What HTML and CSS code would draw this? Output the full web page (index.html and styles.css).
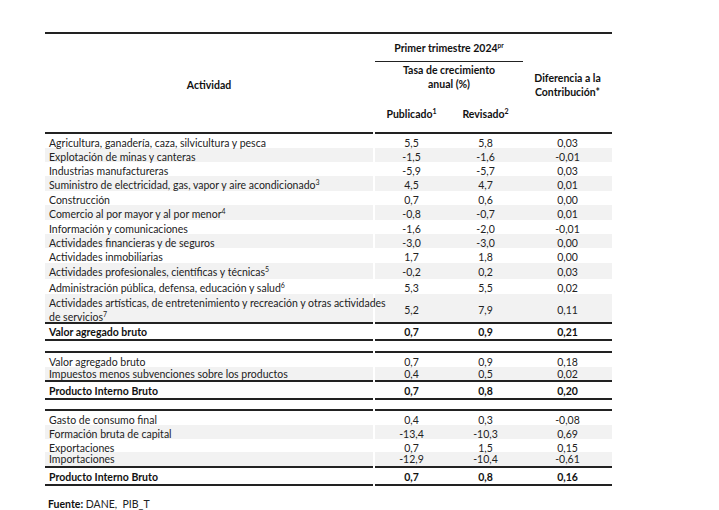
FILE: index.html
```html
<!DOCTYPE html>
<html lang="es">
<head>
<meta charset="utf-8">
<link rel="stylesheet" href="styles.css">
</head>
<body>
<div class="page">
  <div class="tbl">
    <div class="head">
      <div class="h-act"><span>Actividad</span></div>
      <div class="h-trim">Primer trimestre 2024<sup class="sp">pr</sup></div>
      <div class="h-tasa">Tasa de crecimiento<br>anual (%)</div>
      <div class="h-dif"><span>Diferencia a la<br>Contribución*</span></div>
      <div class="h-pub">Publicado<sup class="sn">1</sup></div>
      <div class="h-rev">Revisado<sup class="sn">2</sup></div>
    </div>

    <div class="sec">
      <div class="row r135"><div class="lab"><span>Agricultura, ganadería, caza, silvicultura y pesca</span></div><div class="n">5,5</div><div class="n">5,8</div><div class="n">0,03</div></div>
      <div class="row r14 g"><div class="lab"><span>Explotación de minas y canteras</span></div><div class="n">-1,5</div><div class="n">-1,6</div><div class="n">-0,01</div></div>
      <div class="row r14"><div class="lab"><span>Industrias manufactureras</span></div><div class="n">-5,9</div><div class="n">-5,7</div><div class="n">0,03</div></div>
      <div class="row r155 g"><div class="lab"><span>Suministro de electricidad, gas, vapor y aire acondicionado<sup class="sn">3</sup></span></div><div class="n">4,5</div><div class="n">4,7</div><div class="n">0,01</div></div>
      <div class="row r14"><div class="lab"><span>Construcción</span></div><div class="n">0,7</div><div class="n">0,6</div><div class="n">0,00</div></div>
      <div class="row r15 g"><div class="lab"><span>Comercio al por mayor y al por menor<sup class="sn">4</sup></span></div><div class="n">-0,8</div><div class="n">-0,7</div><div class="n">0,01</div></div>
      <div class="row r14"><div class="lab"><span>Información y comunicaciones</span></div><div class="n">-1,6</div><div class="n">-2,0</div><div class="n">-0,01</div></div>
      <div class="row r14 g"><div class="lab"><span>Actividades financieras y de seguros</span></div><div class="n">-3,0</div><div class="n">-3,0</div><div class="n">0,00</div></div>
      <div class="row r145"><div class="lab"><span>Actividades inmobiliarias</span></div><div class="n">1,7</div><div class="n">1,8</div><div class="n">0,00</div></div>
      <div class="row r16 g"><div class="lab"><span>Actividades profesionales, científicas y técnicas<sup class="sn">5</sup></span></div><div class="n">-0,2</div><div class="n">0,2</div><div class="n">0,03</div></div>
      <div class="row r155"><div class="lab"><span>Administración pública, defensa, educación y salud<sup class="sn">6</sup></span></div><div class="n">5,3</div><div class="n">5,5</div><div class="n">0,02</div></div>
      <div class="row r275 g"><div class="lab"><span>Actividades artísticas, de entretenimiento y recreación y otras actividades<br>de servicios<sup class="sn">7</sup></span></div><div class="n">5,2</div><div class="n">7,9</div><div class="n">0,11</div></div>
      <div class="row tot t125"><div class="lab"><span>Valor agregado bruto</span></div><div class="n">0,7</div><div class="n">0,9</div><div class="n">0,21</div></div>
    </div>

    <div class="sec sec-b">
      <div class="row r14 first"><div class="lab"><span>Valor agregado bruto</span></div><div class="n">0,7</div><div class="n">0,9</div><div class="n">0,18</div></div>
      <div class="row r13 g pre"><div class="lab"><span>Impuestos menos subvenciones sobre los productos</span></div><div class="n">0,4</div><div class="n">0,5</div><div class="n">0,02</div></div>
      <div class="row tot t12"><div class="lab"><span>Producto Interno Bruto</span></div><div class="n">0,7</div><div class="n">0,8</div><div class="n">0,20</div></div>
    </div>

    <div class="sec sec-b">
      <div class="row r1375 first"><div class="lab"><span>Gasto de consumo final</span></div><div class="n">0,4</div><div class="n">0,3</div><div class="n">-0,08</div></div>
      <div class="row r1375 g"><div class="lab"><span>Formación bruta de capital</span></div><div class="n">-13,4</div><div class="n">-10,3</div><div class="n">0,69</div></div>
      <div class="row r1375"><div class="lab"><span>Exportaciones</span></div><div class="n">0,7</div><div class="n">1,5</div><div class="n">0,15</div></div>
      <div class="row r1375 g pre"><div class="lab"><span>Importaciones</span></div><div class="n">-12,9</div><div class="n">-10,4</div><div class="n">-0,61</div></div>
      <div class="row tot t12"><div class="lab"><span>Producto Interno Bruto</span></div><div class="n">0,7</div><div class="n">0,8</div><div class="n">0,16</div></div>
    </div>
  </div>

  <p class="src"><b>Fuente:</b> DANE,&nbsp; PIB_T</p>
</div>
</body>
</html>
```

FILE: styles.css
```css
* { box-sizing: border-box; }
html, body { margin: 0; padding: 0; background: #fff; }
body {
  font-family: Lato, "Liberation Sans", sans-serif;
  font-size: 10.5px;
  color: #222;
}
.page { padding: 32px 0 0 45px; }
.tbl { width: 567px; }

.head {
  display: grid;
  grid-template-columns: 328px 2px 73px 75px 89px;
  grid-template-rows: 28px 36px 36px;
  border-top: 2px solid #222;
  height: 102px;
  font-weight: bold;
  color: #111;
  text-align: center;
  line-height: 14px;
}
.h-act {
  grid-column: 1; grid-row: 1 / 4;
  display: flex; align-items: center; justify-content: center;
  padding-top: 4px;
  border-bottom: 2px solid #222;
}
.h-trim {
  grid-column: 3 / 5; grid-row: 1;
  padding-top: 7px;
  border-bottom: 1.5px solid #222;
}
.h-tasa {
  grid-column: 3 / 5; grid-row: 2;
  padding-top: 1px;
}
.h-dif {
  grid-column: 5; grid-row: 1 / 4;
  display: flex; align-items: center; justify-content: center;
  padding-top: 4px;
  border-bottom: 2px solid #222;
}
.h-pub, .h-rev {
  grid-row: 3;
  padding-top: 9px;
  border-bottom: 2px solid #222;
}
.h-pub { grid-column: 3; }
.h-rev { grid-column: 4; }

sup { line-height: 0; }
.sp { font-size: 6.5px; vertical-align: 4px; }
.sn { font-size: 7px; vertical-align: 4px; }

.row {
  --rule: linear-gradient(to right, #222 0 328px, transparent 328px 330px, #222 330px);
  display: grid;
  grid-template-columns: 330px 73px 75px 89px;
  line-height: 14px;
}
.row > div {
  display: flex;
  align-items: center;
  padding-top: 2px;
}
.lab { margin-right: 2px; padding-left: 4px; white-space: nowrap; }
.n { justify-content: center; }
.g {
  background: linear-gradient(to right, #f2f2f2 0 328px, #fff 328px 330px, #f2f2f2 330px);
}

.r13 { height: 13px; }
.r135 { height: 13.5px; }
.r1375 { height: 13.75px; }
.r14 { height: 14px; }
.r145 { height: 14.5px; }
.r15 { height: 15px; }
.r155 { height: 15.5px; }
.r16 { height: 16px; }
.r275 { height: 27.5px; }
.pre > div { padding-top: 0; }

.tot {
  font-weight: bold;
  color: #111;
  background: var(--rule) left top / 100% 2px no-repeat;
}
.tot > div { padding-top: 3.5px; border-bottom: 2px solid #222; }
.t125 { height: 16.5px; }
.t12 { height: 16px; }

.sec-b { margin-top: 13px; }
.first {
  background: var(--rule) left top / 100% 2px no-repeat;
}
.first > div { padding-top: 4px; }
.first.r14 { height: 16px; }
.first.r1375 { height: 15.75px; }

.src { margin: 15px 0 0 3px; line-height: 14px; color: #222; }
.src b { color: #111; }
```
